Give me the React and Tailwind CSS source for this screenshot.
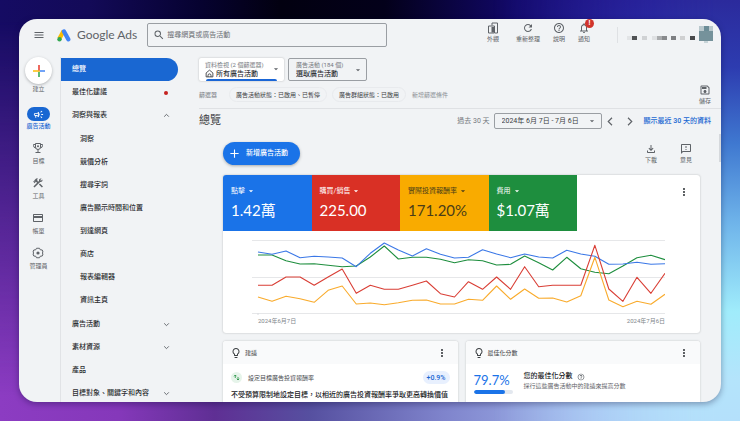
import React from "react";
import {
  MdMenu,
  MdSearch,
  MdRefresh,
  MdHelpOutline,
  MdNotificationsNone,
  MdOutlineSave,
  MdMoreVert,
  MdOutlineFileDownload,
  MdOutlineFeedback,
  MdLightbulbOutline,
  MdOutlineCreditCard,
  MdOutlineConstruction,
  MdOutlineCampaign,
  MdArrowDropDown,
} from "react-icons/md";

const DAYS = 30;
const SERIES = [
  { name: "費用", color: "#1e8e3e", values: [255, 255, 272, 282, 281, 286, 290, 288, 261, 228, 267, 262, 262, 268, 278, 269, 272, 285, 283, 258, 278, 300, 262, 296, 307, 311, 288, 263, 256, 269] },
  { name: "點擊", color: "#3b78e7", values: [246, 253, 243, 263, 259, 261, 264, 290, 250, 219, 240, 258, 236, 253, 264, 262, 239, 252, 263, 252, 261, 264, 241, 252, 259, 283, 282, 277, 283, 281] },
  { name: "實際投資報酬率", color: "#f9ab2c", values: [381, 394, 379, 386, 397, 361, 348, 402, 399, 404, 398, 391, 390, 402, 402, 388, 391, 348, 388, 357, 385, 384, 396, 377, 262, 390, 410, 394, 403, 373] },
  { name: "購買/銷售", color: "#d93e35", values: [346, 346, 321, 321, 346, 321, 297, 370, 346, 358, 358, 346, 333, 371, 381, 335, 358, 321, 358, 290, 350, 346, 346, 346, 226, 357, 394, 322, 370, 310] },
];

function Chart() {
  const x = (i) => 6 + (i * 408) / (DAYS - 1);
  const y = (v) => (v - 207) / 3;
  return (
    <svg viewBox="0 0 414 76" preserveAspectRatio="none" className="block h-[76px] w-full" role="img" aria-label="成效圖表">
      {[1.5, 38.5, 74.5].map((g) => (
        <line key={g} x1="0" x2="414" y1={g} y2={g} stroke="#e6e7e9" />
      ))}
      <line x1="6" x2="6" y1="74" y2="76" stroke="#dadce0" />
      {SERIES.map((s) => (
        <polyline
          key={s.name}
          fill="none"
          stroke={s.color}
          strokeWidth="1.1"
          strokeLinejoin="round"
          vectorEffect="non-scaling-stroke"
          points={s.values.map((v, i) => `${x(i).toFixed(1)},${y(v).toFixed(1)}`).join(" ")}
        />
      ))}
    </svg>
  );
}

function AdsLogo() {
  return (
    <svg viewBox="0 0 28 26" className="h-[13px] w-[14px]" aria-hidden="true">
      <path d="M13.2 4.2 4.6 19.6" stroke="#fbbc04" strokeWidth="8.4" />
      <path d="m14 5 8.6 15.6" stroke="#4285f4" strokeWidth="8.6" strokeLinecap="round" />
      <circle cx="5" cy="20.6" r="4.4" fill="#34a853" />
    </svg>
  );
}

function PlusMark() {
  return (
    <svg viewBox="0 0 12 12" className="h-3 w-3" aria-hidden="true">
      <path d="M6.8 5.2H12v1.6H6.8z" fill="#4285f4" />
      <path d="M5.2 6.8h1.6V12H5.2z" fill="#34a853" />
      <path d="M0 5.2h6.8v1.6H0z" fill="#fbbc04" />
      <path d="M5.2 0h1.6v5.6H5.2z" fill="#ea4335" />
    </svg>
  );
}

function AppearanceIcon() {
  return (
    <svg viewBox="0 0 24 24" className="h-3 w-3" fill="none" stroke="currentColor" strokeWidth="2" aria-hidden="true">
      <path d="M10 7V2h11v20h-5" />
      <path d="M3 8h12v14H3z" />
      <path d="M9 10h5v11H9z" fill="currentColor" stroke="none" />
    </svg>
  );
}

function HomeIcon() {
  return (
    <svg viewBox="0 0 24 24" className="size-[9px]" fill="none" stroke="currentColor" strokeWidth="2.2" strokeLinejoin="round" aria-hidden="true">
      <path d="M3 10.500 12 3l9 7.500V21H3z" />
      <path d="M8 21v-4a4 4 0 0 1 8 0v4" />
    </svg>
  );
}

function TrophyIcon() {
  return (
    <svg viewBox="0 0 24 24" className="h-3 w-3" fill="none" stroke="currentColor" strokeWidth="2" aria-hidden="true">
      <path d="M7 3h10v7a5 5 0 0 1-10 0z" />
      <path d="M7 5H3v2a5 5 0 0 0 4.5 5M17 5h4v2a5 5 0 0 1-4.500 5M12 15v6M7 21h10" />
      <circle cx="12" cy="8.500" r="2" fill="currentColor" stroke="none" />
    </svg>
  );
}

function AdminIcon() {
  return (
    <svg viewBox="0 0 24 24" className="h-3 w-3" fill="none" stroke="currentColor" strokeWidth="2" strokeLinejoin="round" aria-hidden="true">
      <path d="M9 2.500h6l1.500 3 4 .5 1.500 4-1.500 2 1.500 2-1.500 4-4 .5-1.500 3H9l-1.500-3-4-.5L2 14l1.500-2L2 10l1.500-4 4-.5z" />
      <circle cx="12" cy="12" r="3.200" fill="currentColor" stroke="none" />
    </svg>
  );
}

function Chevron({ dir, className }) {
  const d = { up: "m2 8 4-4 4 4", down: "m2 4 4 4 4-4", left: "M8 1 3 6l5 5", right: "m4 1 5 5-5 5" }[dir];
  return (
    <svg viewBox="0 0 12 12" className={className} fill="none" stroke="currentColor" strokeWidth="1.6" aria-hidden="true">
      <path d={d} />
    </svg>
  );
}

function IconLabel({ icon, label, className = "" }) {
  return (
    <button type="button" className={`flex shrink-0 flex-col items-center gap-px text-[6px] leading-[8px] whitespace-nowrap text-[#5f6368] ${className}`}>
      {icon}
      <span>{label}</span>
    </button>
  );
}

const RAIL = [
  { label: "目標", icon: <TrophyIcon /> },
  { label: "工具", icon: <MdOutlineConstruction className="h-3 w-3" /> },
  { label: "帳單", icon: <MdOutlineCreditCard className="h-3 w-3" /> },
  { label: "管理員", icon: <AdminIcon /> },
];

function Rail() {
  return (
    <nav aria-label="主要" className="flex w-[42px] shrink-0 flex-col items-center gap-3 border-r border-[#e1e3e6] pr-[2px]">
      <button type="button" className="mb-[2px] flex flex-col items-center gap-px text-[6px] leading-[8px] text-[#5f6368]">
        <span className="flex size-[27px] items-center justify-center rounded-full bg-white shadow-[0_1px_3px_rgba(60,64,67,0.35)]">
          <PlusMark />
        </span>
        建立
      </button>
      <a href="#campaigns" className="flex flex-col items-center gap-px text-[6px] leading-[8px] font-medium text-[#1967d2]">
        <span className="flex h-[14px] w-[23px] items-center justify-center rounded-full bg-[#1967d2] text-white">
          <MdOutlineCampaign className="h-[11px] w-[11px]" />
        </span>
        廣告活動
      </a>
      {RAIL.map((r) => (
        <a key={r.label} href="#rail" className="flex flex-col items-center gap-[3px] text-[6px] leading-[8px] text-[#5f6368]">
          {r.icon}
          {r.label}
        </a>
      ))}
    </nav>
  );
}

const REPORTS = ["洞察", "競價分析", "搜尋字詞", "廣告顯示時間和位置", "到達網頁", "商店", "報表編輯器", "資訊主頁"];
const GROUPS = [
  { label: "廣告活動", open: true },
  { label: "素材資源", open: true },
  { label: "產品", open: false },
  { label: "目標對象、關鍵字和內容", open: true },
];

function SideNav() {
  const row = "flex h-[23px] shrink-0 items-center justify-between pl-[11px] pr-2 whitespace-nowrap";
  return (
    <nav aria-label="廣告活動選單" className="flex w-[117px] shrink-0 flex-col pt-px text-[7px] font-medium text-[#2b2d30]">
      <a href="#overview" aria-current="page" className="flex h-[23px] shrink-0 items-center rounded-r-full bg-[#1967d2] pl-[11px] text-white">
        總覽
      </a>
      <a href="#recommendations" className={row}>
        最佳化建議
        <span className="mr-[2px] size-1 rounded-full bg-[#c5221f]" />
      </a>
      <button type="button" className={row}>
        洞察與報表
        <Chevron dir="up" className="size-[7px] text-[#5f6368]" />
      </button>
      <ul className="shrink-0 py-px">
        {REPORTS.map((r) => (
          <li key={r}>
            <a href="#report" className="flex h-[23px] items-center pl-[19px]">
              {r}
            </a>
          </li>
        ))}
      </ul>
      {GROUPS.map((g) => (
        <button key={g.label} type="button" className={row}>
          {g.label}
          {g.open && <Chevron dir="down" className="size-[7px] text-[#5f6368]" />}
        </button>
      ))}
    </nav>
  );
}

const PIXELS = [
  "bg-[#e2e4e6]",
  "bg-[#505254]",
  "ml-[5px] bg-[#d0d2d4]",
  "ml-[5px] bg-[#dfe1e3]",
  "bg-[#aaacae]",
  "bg-[#888a8c]",
  "ml-1 bg-[#7d7f82]",
  "ml-1 bg-[#cfd0d1]",
  "ml-[5px] bg-[#48494b]",
];

function Header() {
  return (
    <header className="mb-[6px] flex h-8 shrink-0 items-center pl-[14px]">
      <button type="button" aria-label="主選單" className="text-[#5f6368]">
        <MdMenu className="h-3 w-3" />
      </button>
      <a href="#home" className="ml-3 flex items-center gap-[6px] font-[Lato,'Liberation_Sans',sans-serif] text-[12px] leading-4 whitespace-nowrap text-[#5f6368]">
        <AdsLogo />
        Google Ads
      </a>
      <label className="ml-[10px] flex h-[24px] max-w-[240px] flex-1 items-center gap-[2px] rounded-[2px] border border-[#9a9ea3] pl-[5px] text-[#5f6368]">
        <MdSearch className="h-3 w-3 shrink-0" />
        <input
          type="search"
          aria-label="搜尋"
          placeholder="搜尋網頁或廣告活動"
          className="w-full min-w-0 bg-transparent text-[7px] leading-[10px] outline-none placeholder:text-[#6b6f74]"
        />
      </label>
      <div className="ml-auto flex items-center gap-[13px] self-start pt-[3px]">
        <IconLabel className="mr-1" icon={<AppearanceIcon />} label="外觀" />
        <IconLabel icon={<MdRefresh className="h-3 w-3" />} label="重新整理" />
        <IconLabel icon={<MdHelpOutline className="h-3 w-3" />} label="說明" />
        <IconLabel
          icon={
            <span className="relative">
              <MdNotificationsNone className="h-3 w-3" />
              <span className="absolute -top-[3px] left-[7px] flex size-[9px] items-center justify-center rounded-full bg-[#d0342c] text-[7px] leading-none font-bold text-white">!</span>
            </span>
          }
          label="通知"
        />
      </div>
      <div className="ml-[27px] h-4 w-px bg-[#dfe1e4]" />
      <div className="ml-[9px] flex items-center">
        {PIXELS.map((p, i) => (
          <span key={i} className={`mt-[6px] h-1 w-[5px] ${p}`} />
        ))}
        <svg viewBox="0 0 14 18" className="mr-2 ml-1 h-[18px] w-[14px]" role="img" aria-label="帳戶">
          <path d="M0 0h14v15H0z" fill="#75929b" />
          <path d="M0 0h5v5H0zM10 0h4v5h-4z" fill="#b9c8cd" />
          <path d="M5 0h5v5H5z" fill="#6c8d97" />
          <path d="M5 15h4v2H5z" fill="#c8d5d9" />
        </svg>
      </div>
    </header>
  );
}

function Scope({ label, value, active }) {
  return (
    <label
      className={
        active
          ? "relative flex h-[23px] w-[85px] flex-col justify-center rounded-[2px] bg-white pl-[6px] shadow-[0_0_2px_rgba(60,64,67,0.35)]"
          : "relative flex h-[23px] w-[79px] flex-col justify-center rounded-[2px] border border-[#9a9ea3] pl-[7px]"
      }
    >
      <span className="text-[6px] leading-[8px] whitespace-nowrap text-[#75797e]">{label}</span>
      <span className="flex items-center gap-[2px] text-[#303236]">
        {active && <HomeIcon />}
        <select className="appearance-none bg-transparent text-[7px] leading-[10px] font-medium">
          <option>{value}</option>
        </select>
      </span>
      <MdArrowDropDown className="pointer-events-none absolute top-[6px] right-[3px] h-[10px] w-[10px] text-[#5f6368]" />
      {active && <span className="absolute right-[7px] bottom-0 left-[7px] h-[2px] rounded-t-full bg-[#1a66d6]" />}
    </label>
  );
}

const METRICS = [
  { label: "點擊", value: "1.42萬", tone: "bg-[#1a73e8] text-white rounded-tl-[3px]" },
  { label: "購買/銷售", value: "225.00", tone: "bg-[#d93025] text-white" },
  { label: "實際投資報酬率", value: "171.20%", tone: "bg-[#f9ab00] text-[#4a3d18]" },
  { label: "費用", value: "$1.07萬", tone: "bg-[#1e8e3e] text-white" },
];

function MoreButton({ className = "" }) {
  return (
    <button type="button" aria-label="更多選項" className={`text-[#3c4043] ${className}`}>
      <MdMoreVert className="h-3 w-3" />
    </button>
  );
}

function SmallCard({ title, children }) {
  return (
    <section className="min-w-0 flex-1 rounded-[3px] bg-white shadow-[0_0_2px_rgba(60,64,67,0.3)]">
      <header className="flex h-[23px] items-center rounded-t-[3px] bg-[#f9fafb] pr-[10px] pl-[7px] text-[#3c4043]">
        <MdLightbulbOutline className="h-3 w-3" />
        <h3 className="ml-[3px] text-[6px] leading-[8px]">{title}</h3>
        <MoreButton className="ml-auto" />
      </header>
      {children}
    </section>
  );
}

function Main() {
  return (
    <main className="flex min-w-0 flex-1 flex-col pt-px pl-[21px]">
      <div className="flex shrink-0 gap-1">
        <Scope label="資料檢視 (2 個篩選器)" value="所有廣告活動" active />
        <Scope label="廣告活動 (184 個)" value="選取廣告活動" />
      </div>

      <div className="flex h-7 shrink-0 items-center border-b border-[#dfe1e4] pr-[10px] text-[6px] leading-[8px] whitespace-nowrap">
        <span className="text-[#75797e]">篩選器</span>
        <button type="button" className="ml-3 h-[15px] rounded-full border border-[#e8eaed] px-[6px] text-[#3c4043]">
          廣告活動狀態：已啟用、已暫停
        </button>
        <button type="button" className="ml-[5px] h-[15px] rounded-full border border-[#e8eaed] px-[6px] text-[#3c4043]">
          廣告群組狀態：已啟用
        </button>
        <button type="button" className="ml-[6px] text-[#8a8e93]">新增篩選條件</button>
        <IconLabel className="ml-auto" icon={<MdOutlineSave className="h-3 w-3" />} label="儲存" />
      </div>

      <div className="flex h-6 shrink-0 items-center pr-[10px] text-[7px] leading-[10px] whitespace-nowrap">
        <h1 className="text-[11px] leading-4 text-[#3c4043]">總覽</h1>
        <label htmlFor="range" className="ml-auto text-[#75797e]">過去 30 天</label>
        <div className="relative ml-1">
          <select id="range" className="block h-[16px] w-[108px] appearance-none rounded-[2px] border border-[#9a9ea3] bg-transparent pl-[7px] text-[#3c4043]">
            <option>2024年 6月 7日 - 7月 6日</option>
          </select>
          <MdArrowDropDown className="pointer-events-none absolute top-[3px] right-[5px] h-[10px] w-[10px] text-[#5f6368]" />
        </div>
        <button type="button" aria-label="上一段期間" className="ml-1 text-[#5f6368]">
          <Chevron dir="left" className="size-[9px]" />
        </button>
        <button type="button" aria-label="下一段期間" className="ml-[10px] text-[#5f6368]">
          <Chevron dir="right" className="size-[9px]" />
        </button>
        <a href="#recent" className="ml-[10px] font-medium text-[#1967d2]">顯示最近 30 天的資料</a>
      </div>

      <div className="flex min-h-0 flex-1 flex-col overflow-hidden pt-[9px] pr-[21px] pl-6">
        <div className="flex items-center">
          <button type="button" className="flex h-[23px] items-center gap-[6px] rounded-full bg-[#1a73e8] pr-3 pl-[6px] text-[7px] font-medium whitespace-nowrap text-white shadow-[0_1px_3px_rgba(60,64,67,0.4)]">
            <svg viewBox="0 0 12 12" className="size-[11px]" stroke="currentColor" strokeWidth="1.200" aria-hidden="true">
              <path d="M6 1.500v9M1.500 6h9" />
            </svg>
            新增廣告活動
          </button>
          <div className="ml-auto flex gap-[23px] pr-2">
            <IconLabel icon={<MdOutlineFileDownload className="h-3 w-3" />} label="下載" />
            <IconLabel icon={<MdOutlineFeedback className="h-3 w-3" />} label="意見" />
          </div>
        </div>

        <section className="mt-[10px] rounded-[3px] bg-white pb-2 shadow-[0_0_2px_rgba(60,64,67,0.35)]">
          <div className="flex items-start">
            <div className="flex w-[354px]">
              {METRICS.map((m) => (
                <button key={m.label} type="button" className={`flex h-14 flex-1 basis-0 flex-col items-start pt-[11px] pl-2 whitespace-nowrap ${m.tone}`}>
                  <span className="flex items-center gap-px text-[7px] leading-[10px]">
                    {m.label}
                    <MdArrowDropDown className="h-[10px] w-[10px]" />
                  </span>
                  <span className="mt-1 font-[Lato,'Noto_Sans_CJK_TC',sans-serif] text-[15px] leading-5">{m.value}</span>
                </button>
              ))}
            </div>
            <MoreButton className="mt-[11px] mr-[10px] ml-auto" />
          </div>
          <div className="mt-2 pr-[35px] pl-[29px]">
            <Chart />
            <div className="mt-[2px] flex justify-between pl-[6px] text-[6px] leading-[8px] text-[#80868b]">
              <span>2024年6月7日</span>
              <span>2024年7月6日</span>
            </div>
          </div>
        </section>

        <div className="mt-2 flex gap-2">
          <SmallCard title="建議">
            <div className="px-2 pt-[7px] pb-3">
              <div className="flex items-center">
                <svg viewBox="0 0 22 22" className="size-[11px]" fill="none" stroke="#1e8e3e" strokeWidth="1.600" aria-hidden="true">
                  <circle cx="11" cy="11" r="11" fill="#e6f4ea" stroke="none" />
                  <path d="M8.500 12V6M6 8.500 8.500 6 11 8.500M14 10v6m-2.500-2.500L14 16l2.500-2.500" />
                </svg>
                <span className="ml-[6px] text-[6px] leading-[8px] text-[#4a4d51]">設定目標廣告投資報酬率</span>
                <span className="ml-auto flex h-[13px] items-center rounded-full bg-[#e8f0fe] px-1 text-[7px] leading-[10px] font-medium text-[#1967d2]">+0.9%</span>
              </div>
              <p className="mt-[6px] text-[7px] leading-[10px] font-medium whitespace-nowrap text-[#202124]">
                不受預算限制地設定目標，以相近的廣告投資報酬率爭取更高轉換價值
              </p>
            </div>
          </SmallCard>
          <SmallCard title="最佳化分數">
            <div className="flex gap-[11px] px-2 pt-2 pb-3">
              <div className="w-[39px]">
                <p className="font-[Lato,sans-serif] text-[13px] leading-4 text-[#1a73e8]">79.7%</p>
                <div className="mt-[2px] h-1 overflow-hidden rounded-full bg-[#e3e8ef]">
                  <div className="h-full w-4/5 rounded-full bg-[#1a73e8]" />
                </div>
              </div>
              <div className="whitespace-nowrap">
                <p className="flex items-center gap-1 text-[7px] leading-[9px] font-medium text-[#202124]">
                  您的最佳化分數
                  <MdHelpOutline className="h-2 w-2 text-[#5f6368]" />
                </p>
                <p className="text-[6px] leading-[9px] text-[#5f6368]">採行這些廣告活動中的建議來提高分數</p>
              </div>
            </div>
          </SmallCard>
        </div>
      </div>
    </main>
  );
}

export default function App() {
  return (
    <div className="relative isolate h-screen overflow-hidden bg-[linear-gradient(to_right,#150b63_0%,#130a58_12%,#060230_27%,#020010_38%,#03001a_52%,#12086a_70%,#23149a_88%,#2b2a9c_100%)] p-[19px] font-[Roboto,'Noto_Sans_CJK_TC',sans-serif]">
      <div className="absolute inset-0 -z-10 bg-[linear-gradient(to_right,#8c3cc2_0%,#8538ba_16%,#5f2f94_29%,#5650a0_42%,#7f84cc_60%,#a3b8ee_80%,#b4e0fb_100%)] [mask-image:linear-gradient(to_bottom,transparent_5%,black_94%)]" />
      <div className="absolute inset-y-0 right-0 -z-10 w-1/3 bg-[linear-gradient(to_bottom,#2b2a9c_0%,#2d3cb0_16%,#3f78d0_34%,#6fb4ea_53%,#a0ecfb_74%,#b4e4fb_90%,#b4e0fb_100%)] [mask-image:linear-gradient(to_right,transparent,black_90%)]" />
      <div className="relative flex h-full flex-col overflow-hidden rounded-[18px] bg-[#f1f3f5] text-[#3c4043] shadow-[0_2px_6px_rgba(10,5,50,0.35)]">
        <Header />
        <div className="flex min-h-0 flex-1">
          <Rail />
          <SideNav />
          <Main />
        </div>
        <div aria-hidden="true" className="absolute top-[115px] right-0 h-7 w-[2px] bg-[#d5d8dc]" />
      </div>
    </div>
  );
}
